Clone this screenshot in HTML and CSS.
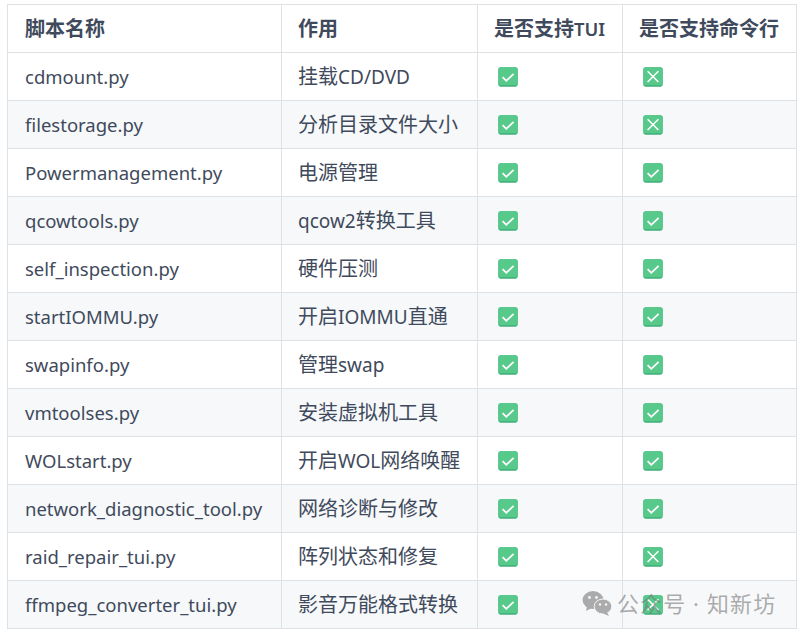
FILE: index.html
```html
<!DOCTYPE html>
<html lang="zh-CN">
<head>
<meta charset="utf-8">
<title>脚本</title>
<link rel="stylesheet" href="styles.css">
</head>
<body>
<svg class="defs" width="0" height="0" aria-hidden="true">
  <symbol id="yes" viewBox="0 0 20 20">
    <rect x="0.3" y="0.3" width="19.4" height="19.4" rx="2.6" fill="#3fae78"/>
    <rect x="0.3" y="0.3" width="19.4" height="18" rx="2.6" fill="#57c98b"/>
    <path d="M4.6 10.2 8.3 13.8 15.6 6.8" fill="none" stroke="#fff" stroke-width="1.8"/>
  </symbol>
  <symbol id="no" viewBox="0 0 20 20">
    <rect x="0.3" y="0.3" width="19.4" height="19.4" rx="2.6" fill="#3fae78"/>
    <rect x="0.3" y="0.3" width="19.4" height="18" rx="2.6" fill="#57c98b"/>
    <path d="M4.6 4.2 15.4 15M15.4 4.2 4.6 15" fill="none" stroke="#fff" stroke-width="1.6"/>
  </symbol>
</svg>
<table class="scripts">
  <thead>
    <tr><th class="c1"><span class="zh">脚本名称</span></th><th class="c2"><span class="zh">作用</span></th><th class="c3"><span class="zh">是否支持</span>TUI</th><th class="c4"><span class="zh">是否支持命令行</span></th></tr>
  </thead>
  <tbody>
    <tr><td>cdmount.py</td><td><span class="zh">挂载</span>CD/DVD</td><td><svg class="ic"><use href="#yes"/></svg></td><td><svg class="ic"><use href="#no"/></svg></td></tr>
    <tr><td>filestorage.py</td><td><span class="zh">分析目录文件大小</span></td><td><svg class="ic"><use href="#yes"/></svg></td><td><svg class="ic"><use href="#no"/></svg></td></tr>
    <tr><td>Powermanagement.py</td><td><span class="zh">电源管理</span></td><td><svg class="ic"><use href="#yes"/></svg></td><td><svg class="ic"><use href="#yes"/></svg></td></tr>
    <tr><td>qcowtools.py</td><td>qcow2<span class="zh">转换工具</span></td><td><svg class="ic"><use href="#yes"/></svg></td><td><svg class="ic"><use href="#yes"/></svg></td></tr>
    <tr><td>self_inspection.py</td><td><span class="zh">硬件压测</span></td><td><svg class="ic"><use href="#yes"/></svg></td><td><svg class="ic"><use href="#yes"/></svg></td></tr>
    <tr><td>startIOMMU.py</td><td><span class="zh">开启</span>IOMMU<span class="zh">直通</span></td><td><svg class="ic"><use href="#yes"/></svg></td><td><svg class="ic"><use href="#yes"/></svg></td></tr>
    <tr><td>swapinfo.py</td><td><span class="zh">管理</span>swap</td><td><svg class="ic"><use href="#yes"/></svg></td><td><svg class="ic"><use href="#yes"/></svg></td></tr>
    <tr><td>vmtoolses.py</td><td><span class="zh">安装虚拟机工具</span></td><td><svg class="ic"><use href="#yes"/></svg></td><td><svg class="ic"><use href="#yes"/></svg></td></tr>
    <tr><td>WOLstart.py</td><td><span class="zh">开启</span>WOL<span class="zh">网络唤醒</span></td><td><svg class="ic"><use href="#yes"/></svg></td><td><svg class="ic"><use href="#yes"/></svg></td></tr>
    <tr><td>network_diagnostic_tool.py</td><td><span class="zh">网络诊断与修改</span></td><td><svg class="ic"><use href="#yes"/></svg></td><td><svg class="ic"><use href="#yes"/></svg></td></tr>
    <tr><td>raid_repair_tui.py</td><td><span class="zh">阵列状态和修复</span></td><td><svg class="ic"><use href="#yes"/></svg></td><td><svg class="ic"><use href="#no"/></svg></td></tr>
    <tr><td>ffmpeg_converter_tui.py</td><td><span class="zh">影音万能格式转换</span></td><td><svg class="ic"><use href="#yes"/></svg></td><td><svg class="ic"><use href="#no"/></svg></td></tr>
  </tbody>
</table>
<div class="mark">
  <svg class="wx" viewBox="0 0 30 26">
    <ellipse cx="11" cy="10" rx="10.5" ry="9" fill="#ababab"/>
    <path d="M5 16 4 21 10 18Z" fill="#ababab"/>
    <ellipse cx="21" cy="16.5" rx="8.8" ry="7.5" fill="#ababab" stroke="#f6f8fa" stroke-width="1"/>
    <path d="M25 22 27 26 21 23.5Z" fill="#ababab"/>
    <circle cx="7.5" cy="7.5" r="1.4" fill="#f6f8fa"/><circle cx="14.5" cy="7.5" r="1.4" fill="#f6f8fa"/>
    <circle cx="18" cy="14.5" r="1.2" fill="#f6f8fa"/><circle cx="24" cy="14.5" r="1.2" fill="#f6f8fa"/>
  </svg>
  <span>公众号 · 知新坊</span>
</div>
</body>
</html>
```
FILE: styles.css
```css
html, body { margin: 0; padding: 0; background: #fff; }
body {
  width: 801px;
  height: 635px;
  overflow: hidden;
  position: relative;
  padding: 4px 0 0 7px;
  box-sizing: border-box;
  font-family: "Noto Sans", "Noto Sans CJK SC", sans-serif;
  color: #3f4a5c;
}
.defs { position: absolute; }
.scripts {
  border-collapse: collapse;
  table-layout: fixed;
  width: 790px;
  font-size: 18.5px;
}
.c1 { width: 274px; }
.c2 { width: 196px; }
.c3 { width: 145px; }
.c4 { width: 174px; }
th, td {
  height: 48px;
  box-sizing: border-box;
  padding: 0 16px;
  border: 1px solid #dfe2e5;
  text-align: left;
  white-space: nowrap;
  line-height: 24px;
  font-size: 18.5px;
}
th:first-child, td:first-child { padding-left: 17px; }
td { font-weight: 400; }
td + td { font-size: 19px; }
th { font-weight: 600; color: #3f4a5c; }
.zh { font-size: 20px; font-family: "Noto Sans CJK SC", sans-serif; }
th .zh { font-weight: 700; }
td:nth-child(n+3) { padding-left: 20px; }
tbody tr:nth-child(even) { background: #f6f8fa; }
.ic { width: 20px; height: 20px; display: block; }
.mark {
  position: absolute;
  left: 582px;
  top: 588px;
  display: flex;
  align-items: center;
  gap: 5px;
  color: rgba(118, 118, 118, 0.6);
  font-size: 22px;
  letter-spacing: 1.1px;
  line-height: 30px;
}
.wx { width: 30px; height: 26px; display: block; }
```
